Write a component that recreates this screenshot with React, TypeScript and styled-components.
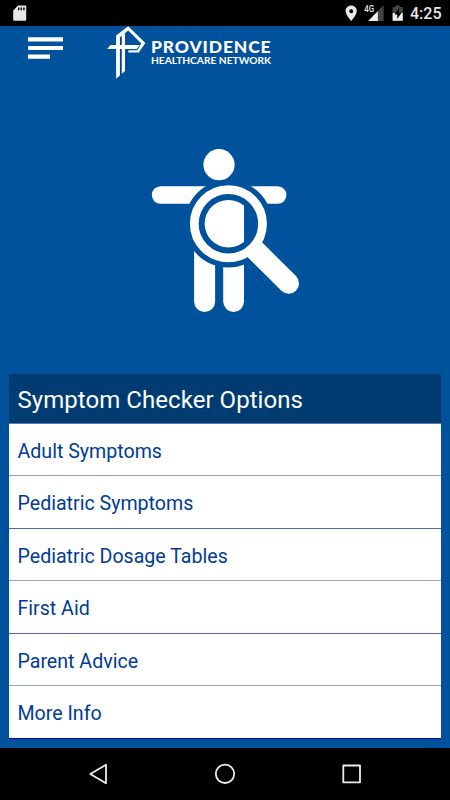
import React from "react";
import styled, { createGlobalStyle } from "styled-components";

const Global = createGlobalStyle`
  * { box-sizing: border-box; }
  body { margin: 0; background: #000; }
`;

const Screen = styled.div`
  width: 450px;
  height: 800px;
  display: flex;
  flex-direction: column;
  overflow: hidden;
  background: #00529c;
  font-family: Roboto, "Liberation Sans", sans-serif;
`;

const StatusBar = styled.div`
  height: 26px;
  flex: none;
  display: flex;
  align-items: center;
  background: #000;
  padding: 0 9px 0 13px;
`;

const StatusIcons = styled.div`
  margin-left: auto;
  display: flex;
`;

const Clock = styled.span`
  margin-left: 6px;
  padding-top: 2px;
  width: 31px;
  font-size: 16px;
  font-weight: 500;
  line-height: 26px;
  color: #e8e8e8;
  white-space: nowrap;
`;

const Header = styled.header`
  height: 60px;
  flex: none;
  display: flex;
  align-items: flex-start;
  padding-left: 28px;
`;

const MenuIcon = styled.svg`
  display: block;
  margin-top: 11px;
`;

const Logo = styled.div`
  display: flex;
  margin-left: 44px;
`;

const LogoText = styled.div`
  margin: 10px 0 0 4px;
  display: flex;
  flex-direction: column;
  color: #fff;
  font-family: Lato, sans-serif;
  white-space: nowrap;
`;

const LogoName = styled.span`
  font-size: 17.5px;
  font-weight: 900;
  line-height: 21px;
  letter-spacing: 0.85px;
`;

const LogoSub = styled.span`
  font-size: 10.2px;
  font-weight: 700;
  line-height: 13px;
  margin-top: -3px;
`;

const Hero = styled.div`
  height: 288px;
  flex: none;
  display: flex;
  justify-content: center;
  padding: 62px 0 0 2px;
`;

const Panel = styled.section`
  margin: 0 9px 0 8.5px;
  display: flex;
  flex-direction: column;
`;

const PanelTitle = styled.h1`
  margin: 0;
  height: 50px;
  padding-left: 9px;
  background: #003c72;
  border-bottom: 1px solid #5f78ad;
  color: #fff;
  font-size: 24px;
  font-weight: 400;
  line-height: 52px;
  letter-spacing: 0.05px;
`;

const Option = styled.div<{ $height: number; $line: string }>`
  height: ${(p) => p.$height}px;
  padding: 1px 0 0 9px;
  background: #fff;
  border-bottom: 1px solid ${(p) => p.$line};
  color: #003b96;
  font-size: 19.6px;
  line-height: 54px;
`;

const NavBar = styled.nav`
  height: 52px;
  flex: none;
  margin-top: auto;
  background: #000;
  display: flex;
  justify-content: center;
  align-items: center;
`;

const options = [
  { label: "Adult Symptoms", height: 52, line: "#8f9fcb" },
  { label: "Pediatric Symptoms", height: 53, line: "#4c6eae" },
  { label: "Pediatric Dosage Tables", height: 52, line: "#99a1cb" },
  { label: "First Aid", height: 53, line: "#4c68aa" },
  { label: "Parent Advice", height: 52, line: "#9ba3c7" },
  { label: "More Info", height: 53, line: "#00108c" },
];

const SdCard = () => (
  <svg width="14" height="18" viewBox="0 0.5 14 18">
    <path d="M5 2H12.2Q13.2 2 13.2 3V16.2Q13.2 17.2 12.2 17.2H1.2Q.2 17.2 .2 16.2V7Z" fill="#e6e6e6" />
    <path d="M5.7 4V6.7M8.3 4V6.7M10.9 4V6.7" stroke="#000" strokeWidth="1.4" />
  </svg>
);

const StatusGlyphs = () => (
  <svg width="60" height="26" viewBox="344.4 0 60 26">
    <path fillRule="evenodd" d="M351.6 5.6C348.4 5.6 346 8 346 11.1C346 15.1 351.6 21 351.6 21S357.2 15.1 357.2 11.1C357.2 8 354.8 5.6 351.6 5.6ZM351.6 9.2A2 2 0 1 1 351.6 13.2A2 2 0 1 1 351.6 9.2Z" fill="#e8e8e8" />
    <path d="M368.5 21L384 5V21Z" fill="#444" />
    <path d="M368.5 21L378.3 11.2V21Z" fill="#f0f0f0" />
    <text x="364.6" y="12" fontFamily="Roboto, sans-serif" fontWeight="500" fontSize="8.5" textLength="9.8" lengthAdjust="spacingAndGlyphs" fill="#e8e8e8">4G</text>
    <path d="M393 7H396V5.3H400V7H403.2V13H393Z" fill="#444" />
    <path d="M393 13H403.2V20.8H393Z" fill="#f0f0f0" />
    <path d="M399.6 7.8L394.8 14.4H397.6V19L402 12.8H399.3Z" fill="#000" />
  </svg>
);

const Cross = () => (
  <svg width="40" height="56" viewBox="107 26 40 56">
    <path d="M116.1 78.8V35.6L128.2 26.2L145.4 43L138.8 52.6H128.4V50.2H137.2L141.3 43.4L128.2 30.6L119.9 37.2V75.4Z" fill="#fff" />
    <path d="M121.7 35.6L125.2 32.9V70.8L121.7 74Z" fill="#fff" />
    <path d="M120.8 37V75M125.8 33.6V70.4" stroke="#0034a0" strokeWidth="0.9" fill="none" />
    <path d="M107.2 49L110.4 45H139.6L136.6 49Z" fill="#fff" />
  </svg>
);

const Figure = () => (
  <svg width="150" height="166" viewBox="151 148 150 166">
    <defs>
      <mask id="lensGap" maskUnits="userSpaceOnUse" x="140" y="140" width="170" height="180">
        <rect x="140" y="140" width="170" height="180" fill="#fff" />
        <circle cx="228.4" cy="223.7" r="43.8" fill="#000" />
      </mask>
      <clipPath id="torso">
        <rect x="190" y="190" width="54" height="70" />
      </clipPath>
    </defs>
    <g fill="#fff">
      <circle cx="219" cy="164.7" r="15.6" />
      <g mask="url(#lensGap)">
        <rect x="151.8" y="186.3" width="134.6" height="17.4" rx="8.7" />
        <rect x="194.1" y="195" width="21" height="117" rx="10.5" />
        <rect x="223.2" y="195" width="20.8" height="117" rx="10.4" />
      </g>
      <circle cx="228.4" cy="223.7" r="23.8" clipPath="url(#torso)" />
    </g>
    <circle cx="228.4" cy="223.7" r="34.1" fill="none" stroke="#fff" strokeWidth="8.8" />
    <path d="M254.5 249.4L288.7 283.4" stroke="#fff" strokeWidth="20.6" />
    <circle cx="288.7" cy="283.4" r="10.3" fill="#fff" />
  </svg>
);

const NavIcons = () => (
  <svg width="280" height="40" viewBox="85 754 280 40" fill="none" stroke="#eee" strokeWidth="1.8" strokeLinejoin="round">
    <path d="M90.3 774L106 764.8V783.2Z" />
    <circle cx="225" cy="773.8" r="9.2" />
    <rect x="343.3" y="765.5" width="16.7" height="16.8" />
  </svg>
);

export default function App() {
  return (
    <>
      <Global />
      <Screen>
        <StatusBar>
          <SdCard />
          <StatusIcons>
            <StatusGlyphs />
          </StatusIcons>
          <Clock>4:25</Clock>
        </StatusBar>
        <Header>
          <MenuIcon width="35" height="22" viewBox="0 0 35 22" fill="#fff">
            <path d="M0 .3H35V4.4H0ZM0 8.9H35V13.1H0ZM0 17.6H22V21.8H0Z" />
          </MenuIcon>
          <Logo>
            <Cross />
            <LogoText>
              <LogoName>PROVIDENCE</LogoName>
              <LogoSub>HEALTHCARE NETWORK</LogoSub>
            </LogoText>
          </Logo>
        </Header>
        <Hero>
          <Figure />
        </Hero>
        <Panel>
          <PanelTitle>Symptom Checker Options</PanelTitle>
          {options.map((o) => (
            <Option key={o.label} $height={o.height} $line={o.line}>
              {o.label}
            </Option>
          ))}
        </Panel>
        <NavBar>
          <NavIcons />
        </NavBar>
      </Screen>
    </>
  );
}
